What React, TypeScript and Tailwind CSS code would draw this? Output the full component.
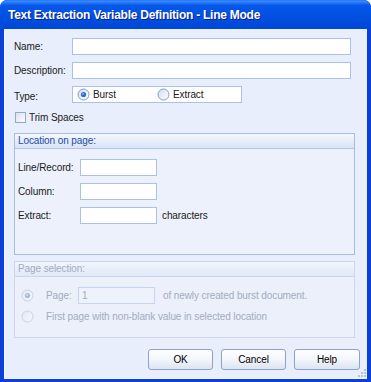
import React from "react";

function Radio({ checked, disabled }: { checked?: boolean; disabled?: boolean }) {
  const id = disabled ? "rgd" : "rge";
  return (
    <svg width="13" height="13" viewBox="0 0 13 13" className="shrink-0">
      <defs>
        <linearGradient id={id + (checked ? "c" : "u")} x1="0" y1="0" x2="1" y2="1">
          <stop offset="0" stopColor={disabled ? "#E3E9F3" : "#D3DCEB"} />
          <stop offset="1" stopColor={disabled ? "#F5F8FC" : "#FFFFFF"} />
        </linearGradient>
      </defs>
      <circle
        cx="6.5"
        cy="6.5"
        r="5.5"
        fill={`url(#${id + (checked ? "c" : "u")})`}
        stroke={disabled ? "#C4D1E6" : "#7E9CCB"}
        strokeWidth="1"
      />
      {checked && (
        <>
          <circle cx="6.5" cy="6.5" r="2.6" fill={disabled ? "#A9BBDA" : "#2C69D2"} />
          <circle cx="6" cy="6" r="1" fill={disabled ? "#D2DDEE" : "#8DB4F2"} />
        </>
      )}
    </svg>
  );
}

function Input({ className = "", value = "", disabled = false }: { className?: string; value?: string; disabled?: boolean }) {
  return (
    <div
      className={
        "h-[17px] border flex items-center px-[3px] " +
        (disabled ? "border-[#C8D5EE] bg-[#EDF2FB] text-[#A2ABBD] " : "border-[#ABC1E8] bg-white text-black ") +
        className
      }
    >
      {value}
    </div>
  );
}

function Button({ label, className = "" }: { label: string; className?: string }) {
  return (
    <div
      className={
        "h-[21px] rounded-[3px] border border-[#8CA3CB] bg-gradient-to-b from-[#FFFFFF] via-[#F3F6FB] to-[#DCE4F1] flex items-center justify-center text-black " +
        className
      }
    >
      {label}
    </div>
  );
}

export default function App() {
  return (
    <div className="w-[371px] h-[382px] bg-[#0A3FD8] rounded-t-[7px] flex flex-col overflow-hidden font-['Liberation_Sans',Arial,sans-serif] text-[10px] leading-none tracking-[-0.1px]">
      {/* title bar */}
      <div className="h-[29px] shrink-0 bg-gradient-to-b from-[#3A8CFF] via-[#0558EA] via-[15%] to-[#0047D8] flex items-center pl-[8px] rounded-t-[7px] border-t border-[#2F7BFF]">
        <span className="text-white font-bold text-[12px] [text-shadow:1px_1px_0_#0B1E86] tracking-[-0.25px]">
          Text Extraction Variable Definition - Line Mode
        </span>
      </div>
      {/* body */}
      <div className="relative flex-1 mx-[4px] mb-[3px] bg-[#E8EEFB] border-l border-b border-[#F4F7FE] pl-[9px] pr-[7px] pt-[9px] flex flex-col text-[#1A1A1A]">
        {/* Name */}
        <div className="flex items-center mr-[9px]">
          <span className="w-[58px] shrink-0">Name:</span>
          <Input className="flex-1" />
        </div>
        {/* Description */}
        <div className="flex items-center mt-[7px] mr-[9px]">
          <span className="w-[58px] shrink-0">Description:</span>
          <Input className="flex-1" />
        </div>
        {/* Type */}
        <div className="flex items-center mt-[7px]">
          <span className="w-[58px] shrink-0 pt-[5px]">Type:</span>
          <div className="w-[170px] h-[17px] border border-[#ABC1E8] bg-white flex items-center pl-[4px]">
            <div className="w-[80px] flex items-center gap-[3px]">
              <Radio checked />
              <span>Burst</span>
            </div>
            <div className="flex items-center gap-[3px]">
              <Radio />
              <span>Extract</span>
            </div>
          </div>
        </div>
        {/* Trim spaces */}
        <div className="flex items-center mt-[8px] h-[13px] ml-[1px]">
          <div className="w-[11px] h-[11px] border border-[#8EA8D2] bg-gradient-to-br from-[#DCE3EF] to-[#FBFCFE]" />
          <span className="ml-[3px]">Trim Spaces</span>
        </div>
        {/* Location on page */}
        <div className="mt-[9px] mr-[5px] h-[122px] border border-[#A5BCE4] bg-[#ECF1FC] flex flex-col">
          <div className="h-[15px] bg-gradient-to-b from-[#F4F7FE] to-[#D9E4F7] border-b border-[#B2C6EA] flex items-center pl-[3px] text-[#1C4A9E]">
            Location on page:
          </div>
          <div className="pl-[3px] pt-[10px] flex flex-col gap-[7px]">
            <div className="flex items-center">
              <span className="w-[62px] shrink-0">Line/Record:</span>
              <Input className="w-[77px]" />
            </div>
            <div className="flex items-center">
              <span className="w-[62px] shrink-0">Column:</span>
              <Input className="w-[77px]" />
            </div>
            <div className="flex items-center">
              <span className="w-[62px] shrink-0">Extract:</span>
              <Input className="w-[77px]" />
              <span className="ml-[5px]">characters</span>
            </div>
          </div>
        </div>
        {/* Page selection */}
        <div className="mt-[6px] mr-[5px] h-[77px] border border-[#CAD7EF] bg-[#EBF0FB] flex flex-col text-[#A3ACBE]">
          <div className="h-[15px] bg-gradient-to-b from-[#F2F5FC] to-[#E0E8F7] border-b border-[#CAD7EF] flex items-center pl-[3px]">
            Page selection:
          </div>
          <div className="pl-[6px] pt-[10px] flex flex-col">
            <div className="flex items-center">
              <Radio checked disabled />
              <span className="ml-[12px] w-[32px] shrink-0">Page:</span>
              <Input className="w-[77px]" value="1" disabled />
              <span className="ml-[8px]">of newly created burst document.</span>
            </div>
            <div className="flex items-center mt-[6px]">
              <Radio disabled />
              <span className="ml-[12px]">First page with non-blank value in selected location</span>
            </div>
          </div>
        </div>
        {/* Buttons */}
        <div className="flex justify-end mt-[11px] gap-[8px]">
          <Button label="OK" className="w-[65px]" />
          <Button label="Cancel" className="w-[65px]" />
          <Button label="Help" className="w-[66px]" />
        </div>
        {/* resize grip */}
        <svg width="10" height="10" viewBox="0 0 10 10" className="absolute right-[1px] bottom-[1px]">
          {[
            [8, 2],
            [5, 5],
            [8, 5],
            [2, 8],
            [5, 8],
            [8, 8],
          ].map(([x, y], i) => (
            <rect key={i} x={x} y={y} width="2" height="2" fill="#B4C4DE" />
          ))}
        </svg>
      </div>
    </div>
  );
}
